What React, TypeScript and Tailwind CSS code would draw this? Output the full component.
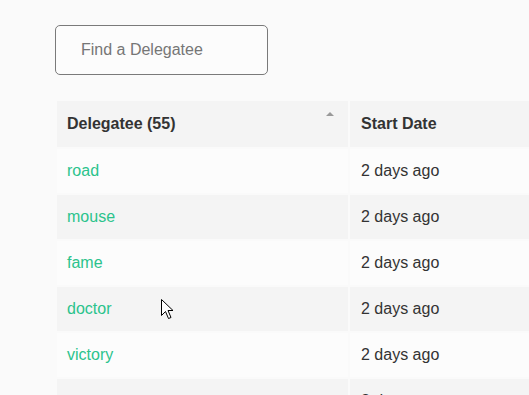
import React from "react";

const rows = [
  { name: "road", date: "2 days ago" },
  { name: "mouse", date: "2 days ago" },
  { name: "fame", date: "2 days ago" },
  { name: "doctor", date: "2 days ago" },
  { name: "victory", date: "2 days ago" },
  { name: "ocean", date: "2 days ago" },
];

export default function App() {
  return (
    <div
      className="relative w-[529px] h-[395px] overflow-hidden bg-[#fafafa] text-[#333]"
      style={{ fontFamily: '"Liberation Sans", Arial, sans-serif' }}
    >
      <div className="pl-[55px] pt-[25px]">
        <div className="w-[213px] h-[50px] rounded-[5px] border border-[#7a7a7a] bg-[#fcfcfc] flex items-center pl-[25px]">
          <span className="text-[16px] text-[#767676]">Find a Delegatee</span>
        </div>
        <table className="mt-[24px] w-[700px] border-separate border-spacing-[2px] text-[16px]">
          <thead>
            <tr>
              <th className="w-[291px] h-[46px] bg-[#f4f4f4] text-left font-bold pl-[10px] relative">
                Delegatee (55)
                <span className="absolute right-[14px] top-[11px] w-0 h-0 border-l-[4px] border-r-[4px] border-b-[4px] border-l-transparent border-r-transparent border-b-[#999]" />
              </th>
              <th className="h-[46px] bg-[#f4f4f4] text-left font-bold pl-[11px]">Start Date</th>
            </tr>
          </thead>
          <tbody>
            {rows.map((r, i) => (
              <tr key={r.name}>
                <td
                  className={
                    "h-[44px] pl-[10px] text-[#2bc38c] " +
                    (i % 2 === 1 ? "bg-[#f4f4f4]" : "bg-[#fcfcfc]")
                  }
                >
                  {r.name}
                </td>
                <td
                  className={
                    "h-[44px] pl-[11px] " + (i % 2 === 1 ? "bg-[#f4f4f4]" : "bg-[#fcfcfc]")
                  }
                >
                  {r.date}
                </td>
              </tr>
            ))}
          </tbody>
        </table>
      </div>
      <svg
        className="absolute left-[161px] top-[299px]"
        width="13"
        height="22"
        viewBox="0 0 13 22"
      >
        <path
          d="M0.5 0.5 L0.5 16.5 L4.5 12.5 L7.5 19.5 L10 18.5 L7 11.5 L12 11.5 Z"
          fill="#fff"
          stroke="#000"
          strokeWidth="1"
          strokeLinejoin="miter"
        />
      </svg>
    </div>
  );
}
